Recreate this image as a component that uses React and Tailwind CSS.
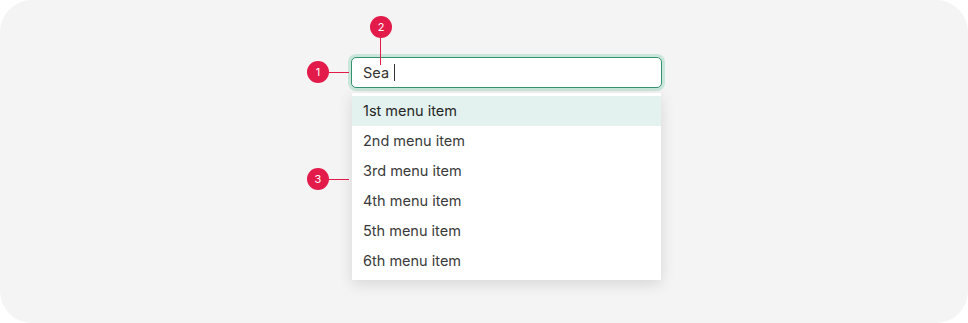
import React from "react";

const items = ["1st menu item", "2nd menu item", "3rd menu item", "4th menu item", "5th menu item", "6th menu item"];

const Marker = ({ n, className }) => (
  <div
    className={`absolute flex h-[22px] w-[22px] items-center justify-center rounded-full bg-[#e31b4b] text-[11px] text-white ${className}`}
  >
    {n}
  </div>
);

const App = () => {
  return (
    <div className="h-[323px] w-[968px] bg-white font-['Inter','Noto_Sans',sans-serif]">
      <div className="relative h-full w-full rounded-[32px] bg-[#f4f4f4] pl-[351px] pt-[57px]">
        {/* callouts */}
        <Marker n="1" className="left-[307px] top-[61px]" />
        <div className="absolute left-[329px] top-[72px] h-px w-[20px] bg-[#e31b4b]" />
        <Marker n="2" className="left-[370px] top-[16px]" />
        <div className="absolute left-[380px] top-[38px] h-[27px] w-px bg-[#e31b4b]" />
        <Marker n="3" className="left-[307px] top-[168px]" />
        <div className="absolute left-[329px] top-[179px] h-px w-[20px] bg-[#e31b4b]" />

        <div className="w-[311px]">
          <div className="flex h-[31px] items-center rounded-[5px] border-[1.5px] border-[#35926f] bg-white pl-[11px] text-[14.5px] text-[#333] shadow-[0_0_0_3px_#c9e6db]">
            <span>Sea</span>
            <span className="ml-[5px] h-[17px] w-px bg-[#333]" />
          </div>
          <div className="ml-px mt-[5px] w-[309px] bg-white pb-[4px] pt-[3px] shadow-[0_4px_14px_rgba(0,0,0,0.12)]">
            {items.map((item, i) => (
              <div
                key={item}
                className={`flex h-[30px] items-center px-[11px] text-[14.5px] ${
                  i === 0 ? "bg-[#e3f2ee] text-[#262626]" : "text-[#3a3a3a]"
                }`}
              >
                {item}
              </div>
            ))}
          </div>
        </div>
      </div>
    </div>
  );
};

export default App;
